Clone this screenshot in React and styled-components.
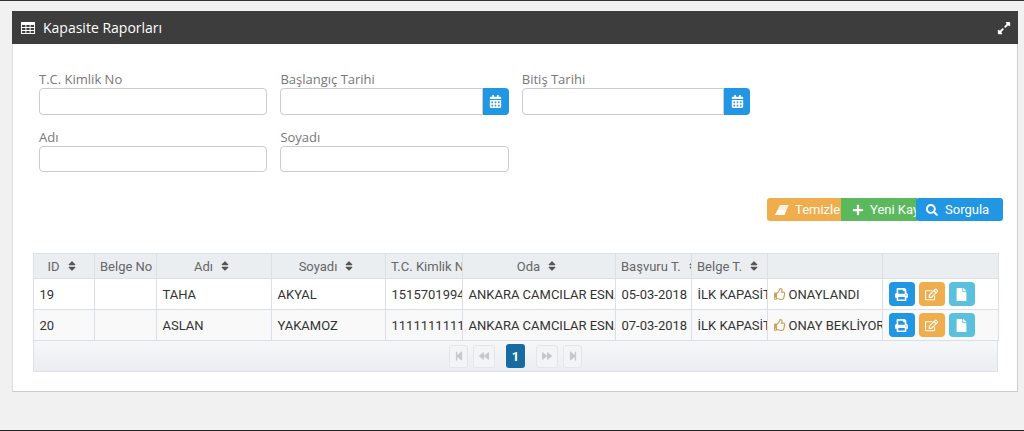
import React from 'react';
import styled, { createGlobalStyle } from 'styled-components';
import {
  FaExpandAlt, FaCalendarAlt, FaPlus, FaSearch, FaSort, FaRegThumbsUp,
  FaPrint, FaRegEdit, FaFile, FaStepBackward, FaBackward, FaForward, FaStepForward,
} from 'react-icons/fa';

const GlobalStyle = createGlobalStyle`
  html, body { margin: 0; padding: 0; }
  body { font-family: "Open Sans", sans-serif; background: #f1f1f1; overflow: hidden; }
  * { box-sizing: border-box; }
`;

const columns = [
  { title: 'ID', width: 61, sort: true },
  { title: 'Belge No', width: 62 },
  { title: 'Adı', width: 115, sort: true },
  { title: 'Soyadı', width: 114, sort: true },
  { title: 'T.C. Kimlik No', width: 77 },
  { title: 'Oda', width: 153, sort: true },
  { title: 'Başvuru T.', width: 76, sort: true },
  { title: 'Belge T.', width: 76, sort: true },
  { title: '', width: 115 },
  { title: '', width: 116 },
];

const rows = [
  { id: '19', name: 'TAHA', surname: 'AKYAL', tc: '15157019940', date: '05-03-2018', status: 'ONAYLANDI' },
  { id: '20', name: 'ASLAN', surname: 'YAKAMOZ', tc: '11111111111', date: '07-03-2018', status: 'ONAY BEKLİYOR' },
];

// the old font-awesome grid icon, the package one has a different head
const TableIcon = () => (
  <svg width="14" height="12" viewBox="0 0 14 12" fill="currentColor">
    <path fillRule="evenodd" d="M0 0h14v12H0zM1 3v2h3.4V3zm4.4 0v2h3.2V3zm4.2 0v2H13V3zM1 6v2h3.4V6zm4.4 0v2h3.2V6zm4.2 0v2H13V6zM1 9v2h3.4V9zm4.4 0v2h3.2V9zm4.2 0v2H13V9z" />
  </svg>
);

const EraserIcon = () => (
  <svg width="14" height="10" viewBox="0 0 15 11" fill="currentColor">
    <path d="M5.2 0H15l-5 11H0z" opacity="0.8" />
    <path d="M2.6 5.6h9.8L10 11H0z" />
  </svg>
);

const App = () => (
  <Page>
    <GlobalStyle />
    <Panel>
      <PanelHeader>
        <PanelTitle>
          <TableIcon />
          Kapasite Raporları
        </PanelTitle>
        <FaExpandAlt />
      </PanelHeader>
      <PanelBody>
        <Form>
          <Field>
            <Label>T.C. Kimlik No</Label>
            <Input />
          </Field>
          <Field>
            <Label>Başlangıç Tarihi</Label>
            <InputGroup>
              <Input $grouped />
              <CalendarButton><FaCalendarAlt /></CalendarButton>
            </InputGroup>
          </Field>
          <Field>
            <Label>Bitiş Tarihi</Label>
            <InputGroup>
              <Input $grouped />
              <CalendarButton><FaCalendarAlt /></CalendarButton>
            </InputGroup>
          </Field>
          <Field>
            <Label>Adı</Label>
            <Input $short />
          </Field>
          <Field>
            <Label>Soyadı</Label>
            <Input $short />
          </Field>
        </Form>
        <Toolbar>
          <ToolButton $color="#f0ad4e" $width={75} $pad={8} $gap={6} $first>
            <EraserIcon />
            <span>Temizle</span>
          </ToolButton>
          <ToolButton $color="#5cb85c" $width={76} $pad={11} $gap={6}>
            <FaPlus />
            <span>Yeni Kayıt</span>
          </ToolButton>
          <ToolButton $color="#2196e3" $width={87} $pad={10} $gap={7} $last>
            <FaSearch />
            <span>Sorgula</span>
          </ToolButton>
        </Toolbar>
        <TableWrap>
          <Table>
            <colgroup>
              {columns.map((c, i) => <Col key={i} $width={c.width} />)}
            </colgroup>
            <thead>
              <tr>
                {columns.map((c, i) => (
                  <Th key={i}>
                    {c.title}
                    {c.sort && <SortIcon />}
                  </Th>
                ))}
              </tr>
            </thead>
            <tbody>
              {rows.map((r, i) => (
                <Row key={r.id} $odd={i % 2 === 1}>
                  <Td>{r.id}</Td>
                  <Td />
                  <Td>{r.name}</Td>
                  <Td>{r.surname}</Td>
                  <Td>{r.tc}</Td>
                  <Td>ANKARA CAMCILAR ESNAF ODASI</Td>
                  <Td>{r.date}</Td>
                  <Td>İLK KAPASİTE</Td>
                  <Td><Thumb />{r.status}</Td>
                  <Td>
                    <Actions>
                      <ActionButton $color="#2196e3"><FaPrint /></ActionButton>
                      <ActionButton $color="#f0ad4e"><FaRegEdit /></ActionButton>
                      <ActionButton $color="#5bc0de"><FaFile /></ActionButton>
                    </Actions>
                  </Td>
                </Row>
              ))}
            </tbody>
          </Table>
          <Pager>
            <PageButton><FaStepBackward /></PageButton>
            <PageButton $wide><FaBackward /></PageButton>
            <PageCurrent>1</PageCurrent>
            <PageButton $wide><FaForward /></PageButton>
            <PageButton><FaStepForward /></PageButton>
          </Pager>
        </TableWrap>
      </PanelBody>
    </Panel>
  </Page>
);

const Page = styled.div`
  height: 431px;
  padding: 10px 6px 0 12px;
  background: #f1f1f1;
  border-top: 1px solid #333;
  border-bottom: 1px solid #222;
`;

const Panel = styled.section`
  height: 381px;
  background: #fff;
  border-right: 1px solid #ccc;
  border-bottom: 1px solid #ccc;
  border-left: 1px solid #ddd;
`;

const PanelHeader = styled.header`
  height: 33px;
  margin-left: -1px;
  margin-right: -1px;
  padding: 0 7px 0 9px;
  display: flex;
  align-items: center;
  justify-content: space-between;
  background: #3d3d3d;
  color: #fff;
  svg { font-size: 14px; }
`;

const PanelTitle = styled.h1`
  margin: 0;
  display: flex;
  align-items: center;
  gap: 8px;
  font-size: 14px;
  font-weight: 400;
`;

const PanelBody = styled.div`
  padding: 28px 19px 0 20px;
`;

const Form = styled.div`
  margin-left: 6px;
  display: grid;
  grid-template-columns: repeat(3, 228.4px);
  column-gap: 13px;
  row-gap: 15px;
`;

const Field = styled.div`
  display: flex;
  flex-direction: column;
`;

const Label = styled.label`
  height: 16px;
  font-size: 13px;
  line-height: 14px;
  color: #777;
`;

const InputGroup = styled.div`
  display: flex;
`;

const Input = styled.input`
  flex: 1 1 auto;
  min-width: 0;
  width: 100%;
  height: ${p => (p.$short ? 26 : 27)}px;
  padding: 0 8px;
  background: #fff;
  border: 1px solid #ccc;
  border-radius: ${p => (p.$grouped ? '4px 0 0 4px' : '4px')};
  outline: none;
`;

const CalendarButton = styled.button`
  flex: none;
  width: 26px;
  height: 27px;
  padding: 0;
  display: flex;
  align-items: center;
  justify-content: center;
  background: #2196e3;
  border: none;
  border-radius: 0 4px 4px 0;
  color: #fff;
  font-size: 13px;
`;

const Toolbar = styled.div`
  margin: 26px -5px 0 0;
  display: flex;
  justify-content: flex-end;
`;

const ToolButton = styled.button`
  width: ${p => p.$width}px;
  height: 23px;
  margin-left: ${p => (p.$first ? 0 : -1)}px;
  padding: 0 0 0 ${p => p.$pad}px;
  display: flex;
  align-items: center;
  gap: ${p => p.$gap}px;
  overflow: hidden;
  white-space: nowrap;
  position: relative;
  background: ${p => p.$color};
  border: none;
  border-radius: ${p => (p.$first ? '3px 0 0 3px' : p.$last ? '3px' : '0')};
  color: #fff;
  font-family: Roboto, sans-serif;
  font-size: 13px;
  svg { flex: none; font-size: 12px; }
`;

const TableWrap = styled.div`
  margin-top: 32px;
  border: 1px solid #dde1e5;
`;

const Table = styled.table`
  width: 965px;
  margin: -1px 0 0 -1px;
  table-layout: fixed;
  border-collapse: collapse;
  font-family: Roboto, sans-serif;
  font-size: 13px;
`;

const Col = styled.col`
  width: ${p => p.$width}px;
`;

const Th = styled.th`
  height: 25px;
  padding: 0 8px 0 5px;
  overflow: hidden;
  white-space: nowrap;
  background: #ebeef1;
  border: 1px solid #dbe0e5;
  color: #666;
  font-weight: 400;
  text-align: center;
`;

const SortIcon = styled(FaSort)`
  margin-left: 6px;
  font-size: 12px;
  vertical-align: -1px;
  color: #555;
`;

const Row = styled.tr`
  background: ${p => (p.$odd ? '#f9f9f9' : '#fff')};
`;

const Td = styled.td`
  height: 31px;
  padding: 0 0 0 5.5px;
  overflow: hidden;
  white-space: nowrap;
  border: 1px solid #d8dfe6;
  color: #333;
`;

const Thumb = styled(FaRegThumbsUp)`
  margin-right: 3px;
  font-size: 12px;
  vertical-align: -1px;
  color: #c9a25c;
`;

const Actions = styled.div`
  display: flex;
  gap: 4px;
`;

const ActionButton = styled.button`
  width: 26px;
  height: 24px;
  padding: 0;
  display: flex;
  align-items: center;
  justify-content: center;
  background: ${p => p.$color};
  border: none;
  border-radius: 4px;
  color: #fff;
  font-size: 13px;
`;

const Pager = styled.div`
  height: 30px;
  display: flex;
  align-items: center;
  justify-content: center;
  gap: 5px;
  background: linear-gradient(#f6f7f9, #ebedf0);
`;

const PageButton = styled.button`
  width: ${p => (p.$wide ? 22 : 19)}px;
  height: 23px;
  padding: 0;
  display: flex;
  align-items: center;
  justify-content: center;
  background: #f3f4f5;
  border: 1px solid #e4e6e8;
  border-radius: 3px;
  color: #c3c9cc;
  font-size: 10px;
`;

const PageCurrent = styled.button`
  width: 19px;
  height: 24px;
  margin: 0 6px;
  padding: 0;
  background: #186ba0;
  border: none;
  border-radius: 3px;
  color: #fff;
  font-family: Roboto, sans-serif;
  font-size: 13px;
  font-weight: 700;
`;

export default App;
